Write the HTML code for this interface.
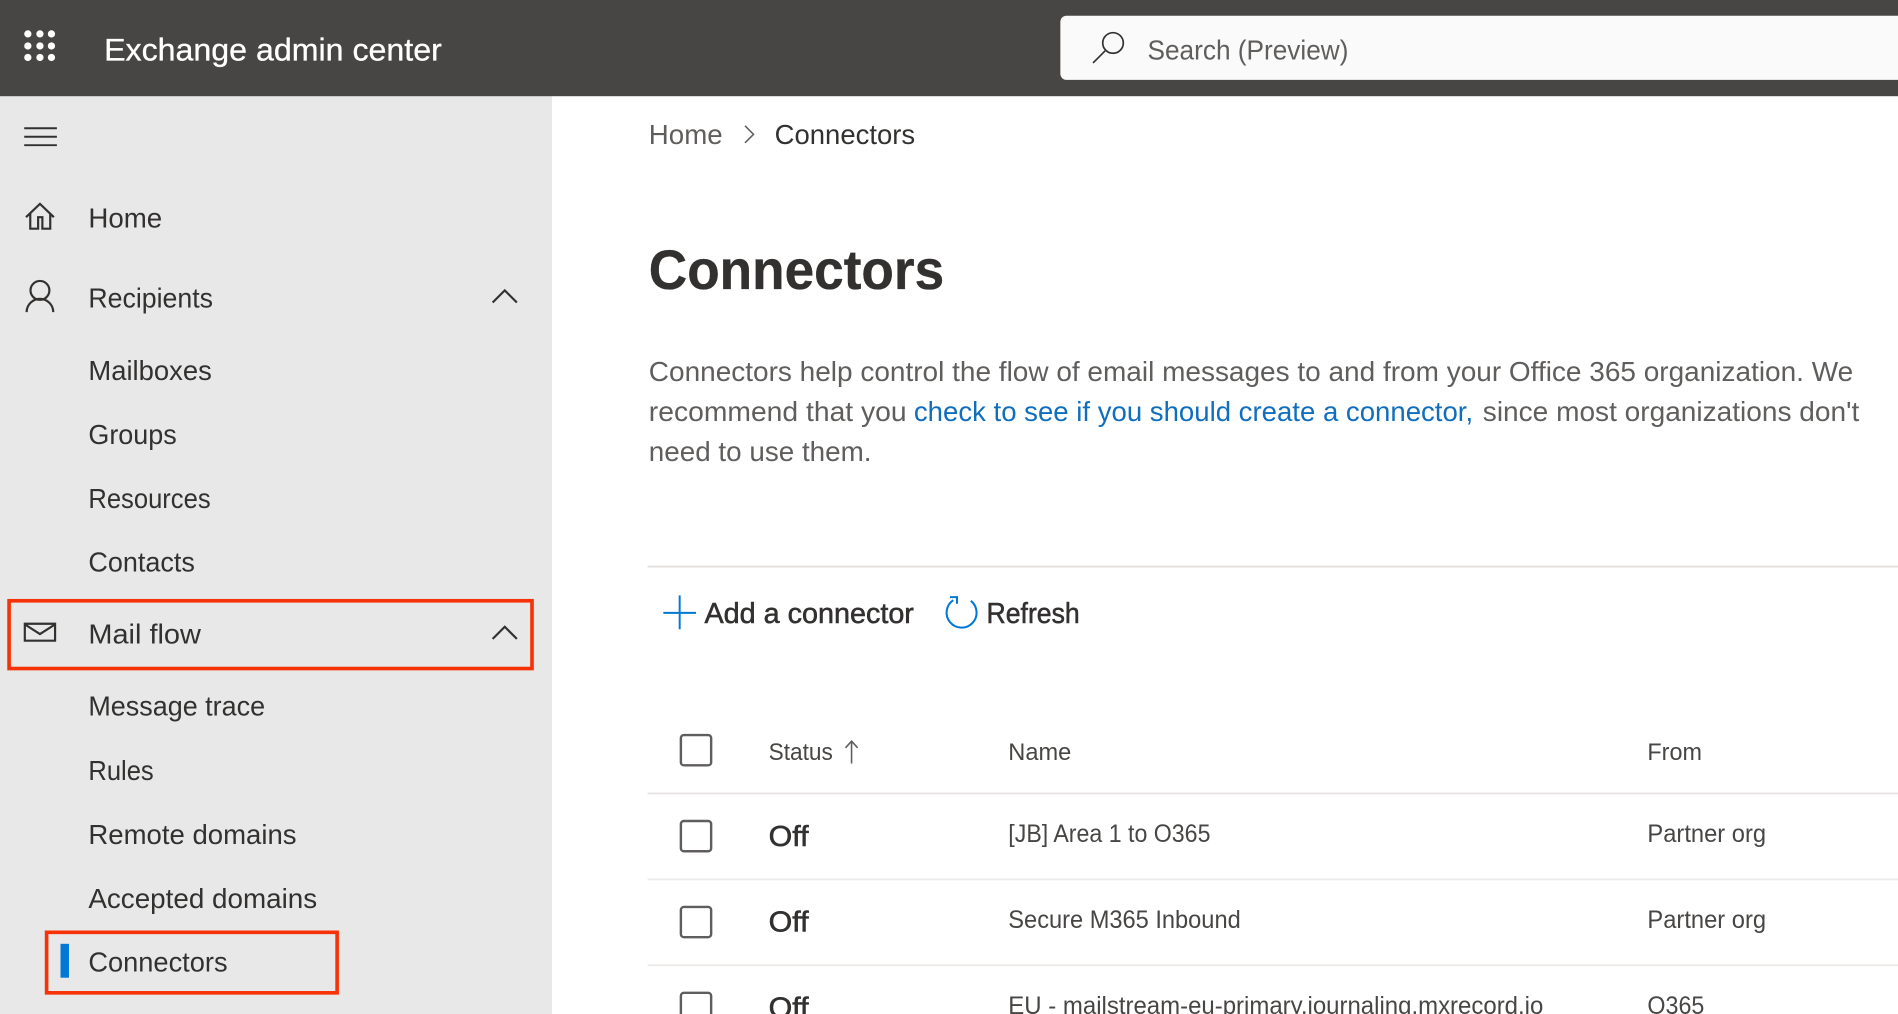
<!DOCTYPE html>
<html lang="en">
<head>
<meta charset="utf-8">
<title>Exchange admin center - Connectors</title>
<style>
html,body{margin:0;padding:0;width:1898px;height:1014px;overflow:hidden;background:#fff}
svg{display:block;filter:blur(.3px)}
text{font-family:"Liberation Sans",sans-serif;white-space:pre}
.n{font-size:23px;fill:#323130}
.g{font-size:23px;fill:#605e5c}
.h{font-size:20px;fill:#484644}
.c{font-size:20.5px;fill:#484644}
.b{font-size:24px;fill:#323130;stroke:#323130;stroke-width:.45}
.o{font-size:24px;fill:#323130;stroke:#323130;stroke-width:.5}
.i{fill:none;stroke:#323130;stroke-width:1.800}
.x{fill:#fff;stroke:#605e5c;stroke-width:2}
</style>
</head>
<body>
<svg xmlns="http://www.w3.org/2000/svg" width="1898" height="1014" viewBox="0 0 1568 838" preserveAspectRatio="none">
<rect width="1568" height="838" fill="#fff"/>
<rect y="79" width="456" height="759" fill="#e8e8e8"/>
<rect width="1568" height="79.5" fill="#484644"/>

<!-- waffle -->
<g fill="#fff">
<circle cx="23" cy="28" r="3"/><circle cx="33" cy="28" r="3"/><circle cx="42.500" cy="28" r="3"/>
<circle cx="23" cy="38" r="3"/><circle cx="33" cy="38" r="3"/><circle cx="42.500" cy="38" r="3"/>
<circle cx="23" cy="47.500" r="3"/><circle cx="33" cy="47.500" r="3"/><circle cx="42.500" cy="47.500" r="3"/>
</g>
<text x="86" y="50" font-size="26" fill="#fff" stroke="#fff" stroke-width=".25" textLength="279" lengthAdjust="spacingAndGlyphs">Exchange admin center</text>

<!-- search -->
<path d="M1568 13H881a5 5 0 0 0-5 5v43a5 5 0 0 0 5 5h687z" fill="#fafafa"/>
<circle cx="919.500" cy="35.500" r="8.500" fill="none" stroke="#323130" stroke-width="1.400"/>
<path d="M913 42L903 52" stroke="#323130" stroke-width="1.400" fill="none"/>
<text x="948" y="49" class="g" textLength="166" lengthAdjust="spacingAndGlyphs">Search (Preview)</text>

<!-- nav icons -->
<path d="M20 106h27M20 113h27M20 120h27" stroke="#323130" stroke-width="1.600" fill="none"/>
<path class="i" d="M21.500 179.500L33 168.500l11.500 11M25 176v13h6.500v-9.500h3.500v9.500h6.500v-13"/>
<circle class="i" cx="33" cy="240" r="7.800"/>
<path class="i" d="M22 258a11 11 0 0 1 22 0"/>
<path class="i" d="M407 250l10-10 10 10"/>
<path d="M20.500 515.500h25v14h-25zM20.500 516l12.500 8 12.500-8" class="i"/>
<path class="i" d="M407 528l10-10 10 10"/>

<!-- nav text -->
<text x="73" y="188" class="n" textLength="61" lengthAdjust="spacingAndGlyphs">Home</text>
<text x="73" y="254" class="n" textLength="103" lengthAdjust="spacingAndGlyphs">Recipients</text>
<text x="73" y="314" class="n" textLength="102" lengthAdjust="spacingAndGlyphs">Mailboxes</text>
<text x="73" y="367" class="n" textLength="73" lengthAdjust="spacingAndGlyphs">Groups</text>
<text x="73" y="420" class="n" textLength="101" lengthAdjust="spacingAndGlyphs">Resources</text>
<text x="73" y="472.500" class="n" textLength="88" lengthAdjust="spacingAndGlyphs">Contacts</text>
<text x="73" y="532" class="n" textLength="93" lengthAdjust="spacingAndGlyphs">Mail flow</text>
<text x="73" y="591.500" class="n" textLength="146" lengthAdjust="spacingAndGlyphs">Message trace</text>
<text x="73" y="644.500" class="n" textLength="54" lengthAdjust="spacingAndGlyphs">Rules</text>
<text x="73" y="697.500" class="n" textLength="172" lengthAdjust="spacingAndGlyphs">Remote domains</text>
<text x="73" y="750.500" class="n" textLength="189" lengthAdjust="spacingAndGlyphs">Accepted domains</text>
<text x="73" y="803" class="n" textLength="115" lengthAdjust="spacingAndGlyphs">Connectors</text>
<rect x="50" y="780" width="7" height="28" fill="#0078d4"/>

<!-- annotations -->
<rect x="7.500" y="496.500" width="432" height="56" fill="none" stroke="#f63208" stroke-width="3"/>
<rect x="38.500" y="770.500" width="240" height="50" fill="none" stroke="#f63208" stroke-width="3"/>

<!-- breadcrumb -->
<text x="536" y="119" class="g" textLength="61" lengthAdjust="spacingAndGlyphs">Home</text>
<path d="M615.500 104l7 7-7 7" fill="none" stroke="#605e5c" stroke-width="1.300"/>
<text x="640" y="119" class="n" textLength="116" lengthAdjust="spacingAndGlyphs">Connectors</text>

<!-- title -->
<text x="536" y="239" font-size="46" font-weight="700" fill="#323130" stroke="#323130" stroke-width=".3" textLength="244" lengthAdjust="spacingAndGlyphs">Connectors</text>

<!-- description -->
<text x="536" y="315" class="g" textLength="995" lengthAdjust="spacingAndGlyphs">Connectors help control the flow of email messages to and from your Office 365 organization. We</text>
<text x="536" y="348" class="g" textLength="213" lengthAdjust="spacingAndGlyphs">recommend that you</text>
<text x="755" y="348" font-size="23" fill="#106ebe" textLength="462" lengthAdjust="spacingAndGlyphs">check to see if you should create a connector,</text>
<text x="1225" y="348" class="g" textLength="311" lengthAdjust="spacingAndGlyphs">since most organizations don't</text>
<text x="536" y="381" class="g" textLength="184" lengthAdjust="spacingAndGlyphs">need to use them.</text>

<rect x="535" y="467.500" width="1033" height="1.500" fill="#e1dfdd"/>

<!-- command bar -->
<path d="M561.500 492v28M548 506.500h27" stroke="#0078d4" stroke-width="1.600" fill="none"/>
<text x="582" y="515" class="b" textLength="173" lengthAdjust="spacingAndGlyphs">Add a connector</text>
<path d="M802 496.500a12.400 12.400 0 1 1-14.500-.5" fill="none" stroke="#0078d4" stroke-width="1.700"/>
<path d="M784.800 493.500h5.800v5.500" fill="none" stroke="#0078d4" stroke-width="1.700"/>
<text x="815" y="515" class="b" textLength="77" lengthAdjust="spacingAndGlyphs">Refresh</text>

<!-- table header -->
<rect class="x" x="562.500" y="607.500" width="25" height="25" rx="2.500"/>
<text x="635" y="628" class="h" textLength="53" lengthAdjust="spacingAndGlyphs">Status</text>
<path d="M703.500 631v-18M698.500 618l5-5.500 5 5.500" fill="none" stroke="#605e5c" stroke-width="1.300"/>
<text x="833" y="628" class="h" textLength="52" lengthAdjust="spacingAndGlyphs">Name</text>
<text x="1361" y="628" class="h" textLength="45" lengthAdjust="spacingAndGlyphs">From</text>
<rect x="535" y="655" width="1033" height="1.500" fill="#e6e4e2"/>

<!-- row 1 -->
<rect class="x" x="562.500" y="678.500" width="25" height="25" rx="2.500"/>
<text x="635" y="699" class="o" textLength="33" lengthAdjust="spacingAndGlyphs">Off</text>
<text x="833" y="696" class="c" textLength="167" lengthAdjust="spacingAndGlyphs">[JB] Area 1 to O365</text>
<text x="1361" y="696" class="c" textLength="98" lengthAdjust="spacingAndGlyphs">Partner org</text>
<rect x="535" y="726" width="1033" height="1.500" fill="#edebe9"/>

<!-- row 2 -->
<rect class="x" x="562.500" y="749.500" width="25" height="25" rx="2.500"/>
<text x="635" y="770" class="o" textLength="33" lengthAdjust="spacingAndGlyphs">Off</text>
<text x="833" y="767" class="c" textLength="192" lengthAdjust="spacingAndGlyphs">Secure M365 Inbound</text>
<text x="1361" y="767" class="c" textLength="98" lengthAdjust="spacingAndGlyphs">Partner org</text>
<rect x="535" y="797" width="1033" height="1.500" fill="#edebe9"/>

<!-- row 3 -->
<rect class="x" x="562.500" y="820.500" width="25" height="25" rx="2.500"/>
<text x="635" y="841" class="o" textLength="33" lengthAdjust="spacingAndGlyphs">Off</text>
<text x="833" y="838" class="c" textLength="442" lengthAdjust="spacingAndGlyphs">EU - mailstream-eu-primary.journaling.mxrecord.io</text>
<text x="1361" y="838" class="c" textLength="47" lengthAdjust="spacingAndGlyphs">O365</text>
</svg>
</body>
</html>
